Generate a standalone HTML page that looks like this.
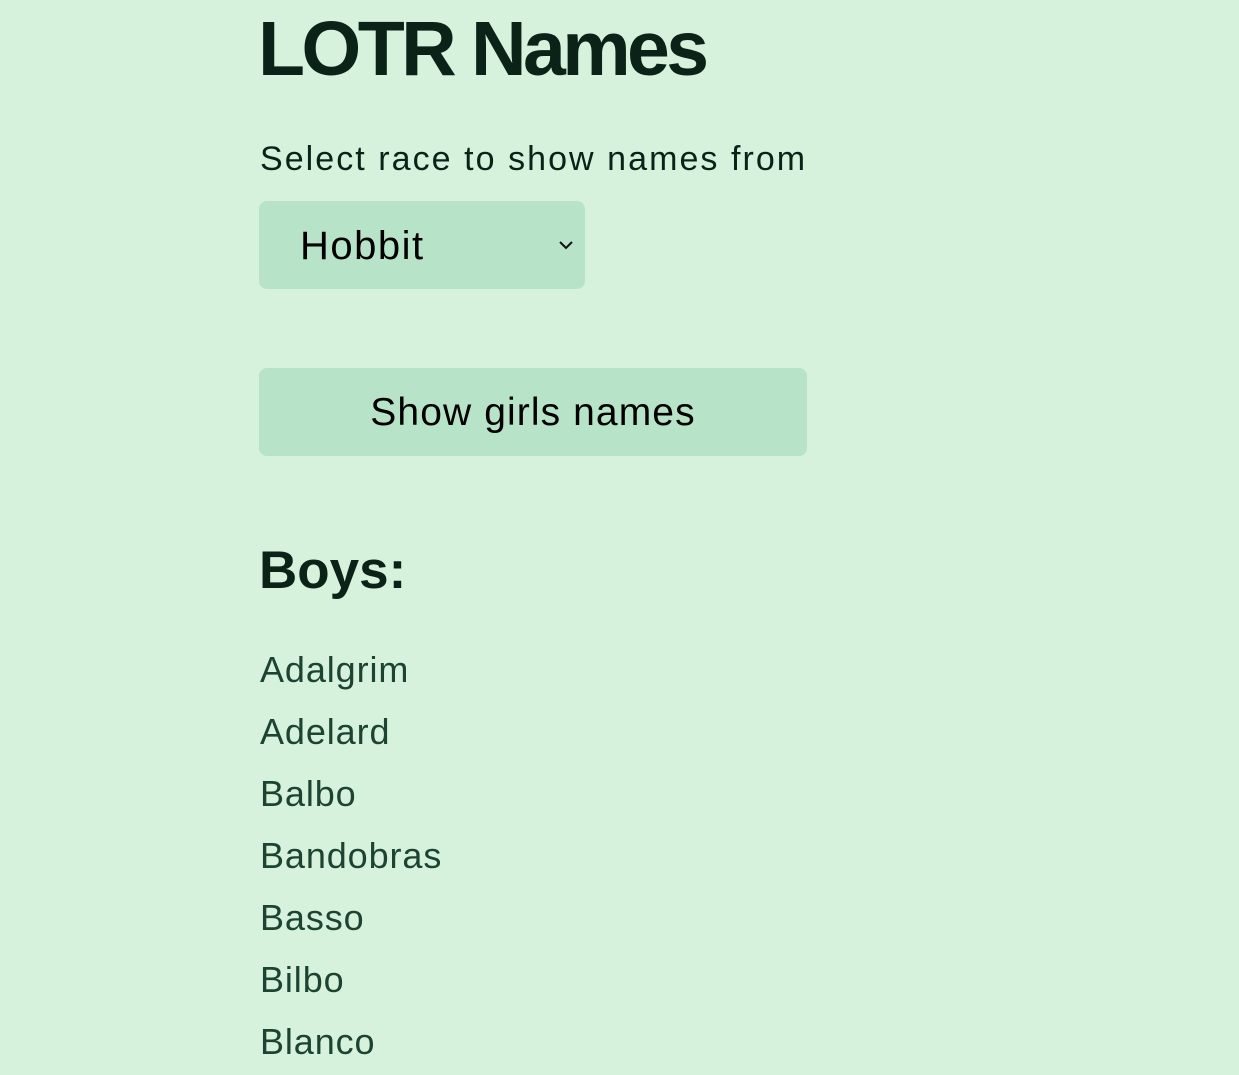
<!DOCTYPE html>
<html><head><meta charset="utf-8"><style>
html,body{margin:0;padding:0;background:#d7f2dc;width:1239px;height:1075px;overflow:hidden;font-family:"Liberation Sans",sans-serif;}
.t{position:absolute;left:260px;white-space:nowrap;}
h1{position:absolute;left:258px;top:5px;margin:0;font-size:77px;font-weight:bold;letter-spacing:-3.6px;color:#0b2218;line-height:88px;}
.lbl{top:139px;font-size:34px;letter-spacing:2.05px;color:#0b2218;line-height:40px;}
.sel{position:absolute;left:259px;top:201px;width:326px;height:88px;background:#b7e3c8;border-radius:8px;}
.sel span{position:absolute;left:41px;top:23px;font-size:40px;letter-spacing:1.5px;color:#000;line-height:44px;}
.btn{position:absolute;left:259px;top:368px;width:548px;height:88px;background:#b7e3c8;border-radius:8px;text-align:center;font-size:39px;line-height:90px;letter-spacing:1.1px;color:#000;}
h2{position:absolute;left:259px;top:540px;margin:0;font-size:53px;font-weight:bold;color:#0b2218;line-height:62px;}
.n{font-size:36px;letter-spacing:0.9px;color:#1d4332;line-height:40px;}
</style></head><body>
<h1>LOTR Names</h1>
<div class="t lbl">Select race to show names from</div>
<div class="sel"><span>Hobbit</span>
<svg style="position:absolute;left:299px;top:39px" width="16" height="10" viewBox="0 0 16 10"><path d="M2 2 L8 8 L14 2" fill="none" stroke="#111" stroke-width="2"/></svg></div>
<div class="btn">Show girls names</div>
<h2>Boys:</h2>
<div class="t n" style="top:650px">Adalgrim</div>
<div class="t n" style="top:712px">Adelard</div>
<div class="t n" style="top:774px">Balbo</div>
<div class="t n" style="top:836px">Bandobras</div>
<div class="t n" style="top:898px">Basso</div>
<div class="t n" style="top:960px">Bilbo</div>
<div class="t n" style="top:1022px">Blanco</div>
</body></html>
